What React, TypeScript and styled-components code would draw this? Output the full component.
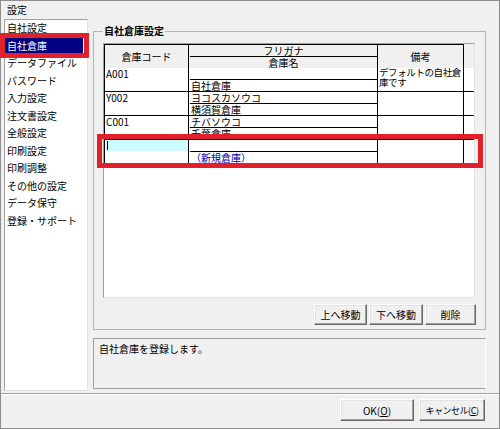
import styled, {createGlobalStyle} from "styled-components";

const GlobalStyle = createGlobalStyle`
  html, body {
    margin: 0;
    padding: 0;
    background: #f0f0f0;
  }
  body {
    font-family: "Noto Sans CJK JP", "Noto Sans", sans-serif;
    font-size: 10px;
    color: #000;
  }
  * {
    box-sizing: border-box;
  }
`

const Window = styled.div`
  width: 500px;
  height: 429px;
  border: 1px solid #8e8e8e;
  background: #f0f0f0;
  display: flex;
  flex-direction: column;
`

const TitleBar = styled.div`
  height: 18px;
  line-height: 18px;
  padding-left: 6px;
`

const Main = styled.div`
  display: flex;
  height: 374px;
  padding-left: 3px;
  gap: 5px;
`

const SideList = styled.ul`
  width: 84px;
  height: 372px;
  margin: 0;
  padding: 0;
  list-style: none;
  background: #fff;
  border: 1px solid;
  border-color: #a0a0a0 #e3e3e3 #e3e3e3 #a0a0a0;
`

const SideItem = styled.li<{ $selected?: boolean }>`
  position: relative;
  width: 78px;
  height: 17.5px;
  line-height: 16px;
  padding-left: 2px;
  white-space: nowrap;
  background: ${props => props.$selected ? "#000080" : "transparent"};
  color: ${props => props.$selected ? "#fff" : "#000"};
`

const RedFrame = styled.div<{ $inset: string }>`
  position: absolute;
  inset: ${props => props.$inset};
  border: 5px solid #e2202c;
  pointer-events: none;
  z-index: 5;
`

const RightPane = styled.div`
  width: 393px;
  display: flex;
  flex-direction: column;
  padding-top: 6px;
`

const GroupBox = styled.fieldset`
  margin: 0;
  min-width: 0;
  padding: 6px 9px 4px 9px;
  border: 1px solid #b4b4b4;
`

const GroupTitle = styled.legend`
  font-weight: bold;
  padding: 0 1px;
  line-height: 12px;
`

const GridFrame = styled.div`
  position: relative;
  width: 372px;
  height: 255px;
  border: 1px solid;
  border-color: #a0a0a0 #e3e3e3 #e3e3e3 #a0a0a0;
  background: #fff;
`

const Table = styled.div`
  width: 370px;
`

const Row = styled.div`
  position: relative;
  display: grid;
  grid-template-columns: 85px 189px 86px 10px;
  height: 24px;
`

const Cell = styled.div<{ $header?: boolean; $first?: boolean; $filler?: boolean; $center?: boolean }>`
  display: flex;
  flex-direction: column;
  align-items: ${props => props.$center ? "center" : "stretch"};
  justify-content: ${props => props.$center ? "center" : "flex-start"};
  background: ${props => props.$header ? "#f0f0f0" : "#fff"};
  border-left: ${props => props.$first ? "1px solid #000" : "none"};
  border-right: ${props => props.$filler ? "none" : "1px solid #000"};
  border-bottom: ${props => props.$filler && props.$header ? "none" : "1px solid #000"};
  border-top: ${props => props.$header && !props.$filler ? "1px solid #000" : "none"};
  line-height: 11px;
  padding-left: ${props => props.$center ? "0" : "1px"};
  white-space: nowrap;
`

const SubCell = styled.div<{ $line?: boolean; $center?: boolean; $bg?: string; $color?: string }>`
  height: ${props => props.$line ? "12px" : "auto"};
  flex: ${props => props.$line ? "none" : "1"};
  border-bottom: ${props => props.$line ? "1px solid #000" : "none"};
  background: ${props => props.$bg || "transparent"};
  color: ${props => props.$color || "#000"};
  line-height: 11px;
  padding-left: ${props => props.$center ? "0" : "1px"};
  white-space: nowrap;
  display: flex;
  align-items: center;
  justify-content: ${props => props.$center ? "center" : "flex-start"};
`

const InputCell = styled(SubCell)`
  height: 11px;
  flex: none;
  padding-left: 1px;
`

const NoteLine = styled.div`
  font-size: 9.5px;
  letter-spacing: -0.4px;
  line-height: 9.5px;
`

const Caret = styled.span`
  display: inline-block;
  width: 1px;
  height: 9px;
  background: #000;
`

const ButtonRow = styled.div`
  display: flex;
  justify-content: flex-end;
  gap: 2px;
  margin-top: 6px;
`

const Button = styled.button<{ $w: number; $h: number; $tight?: boolean }>`
  width: ${props => props.$w}px;
  height: ${props => props.$h}px;
  padding: 0;
  font-family: "Noto Sans CJK JP", "Noto Sans", sans-serif;
  font-size: ${props => props.$tight ? "9px" : "10px"};
  letter-spacing: ${props => props.$tight ? "-0.5px" : "0"};
  white-space: nowrap;
  overflow: visible;
  color: #000;
  background: #f0f0f0;
  border: 1px solid;
  border-color: #fff #696969 #696969 #fff;
  box-shadow: inset -1px -1px 0 #a0a0a0, inset 1px 1px 0 #e3e3e3;

  u {
    text-decoration: underline;
  }
`

const DescBox = styled.div`
  margin-top: 8px;
  height: 51px;
  padding: 4px 5px;
  line-height: 12px;
  border: 1px solid;
  border-color: #a0a0a0 #fff #a0a0a0 #a0a0a0;
`

const Separator = styled.div`
  border-top: 1px solid #a0a0a0;
  border-bottom: 1px solid #fff;
`

const BottomBar = styled.div`
  flex: 1;
  display: flex;
  justify-content: flex-end;
  align-items: flex-start;
  gap: 5px;
  padding: 4px 14px 0 0;
`

const menu = [
  "自社設定", "自社倉庫", "データファイル", "パスワード", "入力設定", "注文書設定",
  "全般設定", "印刷設定", "印刷調整", "その他の設定", "データ保守", "登録・サポート",
]

const records = [
  {code: "A001", kana: "", name: "自社倉庫", note: ["デフォルトの自社倉", "庫です"]},
  {code: "Y002", kana: "ヨコスカソウコ", name: "横須賀倉庫", note: []},
  {code: "C001", kana: "チバソウコ", name: "千葉倉庫", note: []},
]

export default function App() {
  return (
    <>
      <GlobalStyle/>
      <Window>
        <TitleBar>設定</TitleBar>
        <Main>
          <SideList>
            {menu.map(item => (
              <SideItem key={item} $selected={item === "自社倉庫"}>
                {item}
                {item === "自社倉庫" && <RedFrame $inset="-5px -6px -3px -5px"/>}
              </SideItem>
            ))}
          </SideList>
          <RightPane>
            <GroupBox>
              <GroupTitle>自社倉庫設定</GroupTitle>
              <GridFrame>
                <Table>
                  <Row>
                    <Cell $header $first $center>倉庫コード</Cell>
                    <Cell $header>
                      <SubCell $line $center>フリガナ</SubCell>
                      <SubCell $center>倉庫名</SubCell>
                    </Cell>
                    <Cell $header $center>備考</Cell>
                    <Cell $header $filler/>
                  </Row>
                  {records.map(r => (
                    <Row key={r.code}>
                      <Cell $first>{r.code}</Cell>
                      <Cell>
                        <SubCell $line>{r.kana}</SubCell>
                        <SubCell>{r.name}</SubCell>
                      </Cell>
                      <Cell>
                        {r.note.map(line => <NoteLine key={line}>{line}</NoteLine>)}
                      </Cell>
                      <Cell $filler/>
                    </Row>
                  ))}
                  <Row>
                    <Cell $first>
                      <InputCell $bg="#ccfcff"><Caret/></InputCell>
                    </Cell>
                    <Cell>
                      <SubCell $line/>
                      <SubCell $color="#0000b8">（新規倉庫）</SubCell>
                    </Cell>
                    <Cell/>
                    <Cell $filler/>
                    <RedFrame $inset="-6px -9px -4px -7px"/>
                  </Row>
                </Table>
              </GridFrame>
              <ButtonRow>
                <Button $w={53} $h={21}>上へ移動</Button>
                <Button $w={54} $h={21}>下へ移動</Button>
                <Button $w={51} $h={21}>削除</Button>
              </ButtonRow>
            </GroupBox>
            <DescBox>自社倉庫を登録します。</DescBox>
          </RightPane>
        </Main>
        <Separator/>
        <BottomBar>
          <Button $w={74} $h={22}>OK(<u>O</u>)</Button>
          <Button $w={66} $h={22} $tight>キャンセル(<u>C</u>)</Button>
        </BottomBar>
      </Window>
    </>
  )
}
